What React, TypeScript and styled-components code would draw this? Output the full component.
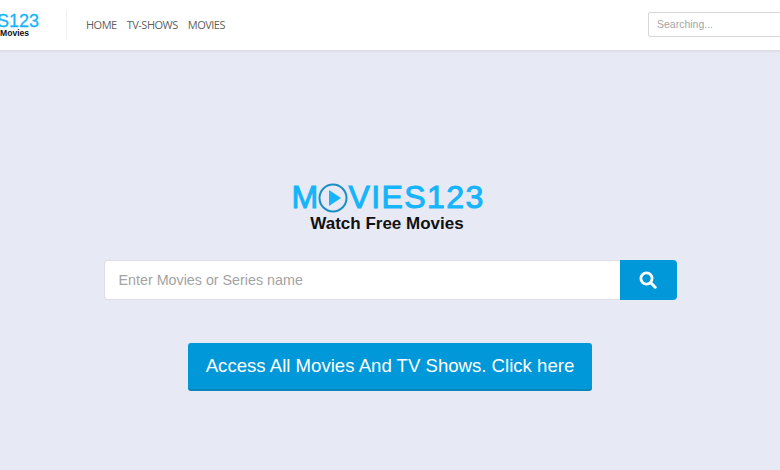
import styled, { createGlobalStyle } from 'styled-components'

const GlobalStyle = createGlobalStyle`
    html, body {
        margin: 0;
        padding: 0;
        height: 100%;
        overflow: hidden;
        background: #e7e9f5;
        font-family: "Liberation Sans", Arial, sans-serif;
    }
    * {
        box-sizing: border-box;
    }
`

const Page = styled.div`
    width: 780px;
    height: 470px;
    display: flex;
    flex-direction: column;
    overflow: hidden;
`

const Header = styled.header`
    height: 51px;
    flex: none;
    display: flex;
    align-items: center;
    background: #fff;
    border-bottom: 1px solid #dcdde6;
    box-shadow: 0 1px 2px rgba(0, 0, 0, 0.05);
`

const SmallLogo = styled.div`
    width: 39px;
    height: 28px;
    padding-top: 3px;
    overflow: hidden;
    display: flex;
    flex-direction: column;
    align-items: flex-end;
    margin-bottom: 2px;
`

const SmallLogoTitle = styled.span`
    font-size: 18px;
    line-height: 16px;
    height: 16px;
    color: #15b4fb;
    -webkit-text-stroke: 0.3px #15b4fb;
    white-space: nowrap;
`

const SmallLogoSub = styled.span`
    align-self: flex-start;
    font-size: 8.6px;
    line-height: 8px;
    font-weight: bold;
    color: #111;
`

const Divider = styled.div`
    width: 1px;
    height: 30px;
    margin: 0 19px 0 27px;
    background: #f1f1f4;
`

const Nav = styled.nav`
    display: flex;
    gap: 10px;
`

const NavLink = styled.a`
    font-family: "Open Sans", sans-serif;
    font-size: 11px;
    line-height: 16px;
    letter-spacing: -0.5px;
    color: #5f5f5f;
`

const SearchInput = styled.input`
    width: 140px;
    height: 25px;
    margin-left: auto;
    margin-right: -8px;
    margin-bottom: 2px;
    padding: 0 8px;
    font-family: "Liberation Sans", Arial, sans-serif;
    font-size: 10.5px;
    background: #fff;
    border: 1px solid #d8d8d8;
    border-radius: 2px;
    outline: none;

    &::placeholder {
        color: #a5a5a5;
        opacity: 1;
    }
`

const Main = styled.main`
    flex: 1;
    display: flex;
    flex-direction: column;
    align-items: center;
    padding-top: 129px;
`

const Logo = styled.div`
    display: flex;
    flex-direction: column;
    align-items: center;
    margin-left: -4px;
`

const LogoTitle = styled.div`
    display: flex;
    align-items: center;
    height: 35px;
    font-size: 32px;
    line-height: 35px;
    color: #15b4fb;
    letter-spacing: 1.4px;
    -webkit-text-stroke: 1px #15b4fb;
`

const LogoSub = styled.div`
    font-size: 17px;
    line-height: 17px;
    font-weight: bold;
    color: #111;
    margin-left: -2px;
`

const SearchForm = styled.form`
    display: flex;
    width: 573px;
    height: 40px;
    margin-top: 28px;
`

const QueryInput = styled.input`
    flex: 1;
    min-width: 0;
    padding: 0 14px;
    font-family: "Liberation Sans", Arial, sans-serif;
    font-size: 14.3px;
    background: #fff;
    border: 1px solid #dedfe6;
    border-right: none;
    border-radius: 4px 0 0 4px;
    outline: none;

    &::placeholder {
        color: #a3a3a3;
        opacity: 1;
    }
`

const SearchButton = styled.button`
    width: 57px;
    display: flex;
    align-items: center;
    justify-content: center;
    padding: 0;
    background: #0098d9;
    border: none;
    border-radius: 0 4px 4px 0;
`

const AccessButton = styled.a`
    width: 404px;
    height: 48px;
    margin-top: 43px;
    display: flex;
    align-items: center;
    justify-content: center;
    font-size: 18.6px;
    color: #fff;
    background: #0098d9;
    border-bottom: 2px solid #0b84bb;
    border-radius: 3px;
`

const PlayIcon = () => (
    <svg width="30" height="30" viewBox="0 0 30 30" style={{ margin: '0 0 0 -1px' }}>
        <circle cx="15" cy="15" r="13.5" fill="none" stroke="#1a8fc4" strokeWidth="2" />
        <path d="M11 7 L23 15 L11 23 Z" fill="#15b4fb" />
    </svg>
)

const MagnifierIcon = () => (
    <svg width="18" height="18" viewBox="0 0 18 18">
        <circle cx="7.5" cy="7.5" r="5.6" fill="none" stroke="#fff" strokeWidth="2.8" />
        <path d="M11.8 11.8 L16.2 16.2" stroke="#fff" strokeWidth="3" strokeLinecap="round" />
    </svg>
)

const App = () => {
    return (
        <Page>
            <GlobalStyle />
            <Header>
                <SmallLogo>
                    <SmallLogoTitle>MOVIES123</SmallLogoTitle>
                    <SmallLogoSub>Movies</SmallLogoSub>
                </SmallLogo>
                <Divider />
                <Nav>
                    <NavLink>HOME</NavLink>
                    <NavLink>TV-SHOWS</NavLink>
                    <NavLink>MOVIES</NavLink>
                </Nav>
                <SearchInput placeholder="Searching..." />
            </Header>
            <Main>
                <Logo>
                    <LogoTitle>
                        M<PlayIcon />VIES123
                    </LogoTitle>
                    <LogoSub>Watch Free Movies</LogoSub>
                </Logo>
                <SearchForm>
                    <QueryInput placeholder="Enter Movies or Series name" />
                    <SearchButton type="button">
                        <MagnifierIcon />
                    </SearchButton>
                </SearchForm>
                <AccessButton>Access All Movies And TV Shows. Click here</AccessButton>
            </Main>
        </Page>
    )
}

export default App
